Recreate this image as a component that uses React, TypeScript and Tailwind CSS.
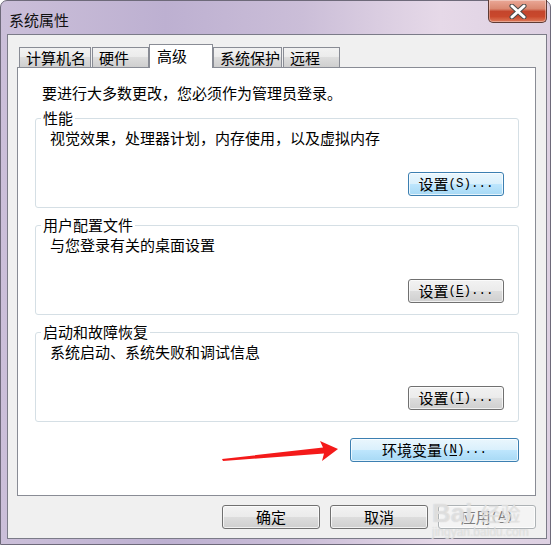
import * as React from 'react';

const cjk = '"Noto Sans CJK SC", "Liberation Sans", sans-serif';

function Key({ k, line = true }: { k: string; line?: boolean }) {
  return (
    <span className="text-[12.5px] tracking-[0px]" style={{ fontFamily: '"Liberation Mono", monospace' }}>
      (<span className={line ? 'underline underline-offset-2' : ''}>{k}</span>)...
    </span>
  );
}

function WinButton({
  children,
  className = '',
  variant = 'normal',
}: {
  children: React.ReactNode;
  className?: string;
  variant?: 'normal' | 'blue' | 'disabled';
}) {
  const look =
    variant === 'blue'
      ? 'border-[#3c7fb1] bg-[linear-gradient(#eaf6fd,#d9f0fc_50%,#bee6fd_50%,#a7d9f5)] text-black'
      : variant === 'disabled'
      ? 'border-[#adb2b5] bg-[#f4f4f4] text-[#7d7d7d]'
      : 'border-[#707070] bg-[linear-gradient(#f2f2f2,#ebebeb_50%,#dddddd_50%,#cfcfcf)] text-black';
  return (
    <div
      className={`h-[24px] flex items-center justify-center rounded-[3px] border text-[15px] leading-[18px] shadow-[inset_0_0_0_1px_rgba(255,255,255,0.7)] ${look} ${className}`}
    >
      {children}
    </div>
  );
}

function GroupBox({ title, desc, button }: { title: string; desc: string; button: React.ReactNode }) {
  return (
    <div className="relative h-[90px] rounded-[3px] border border-[#d5dfe5] flex flex-col justify-between pt-[10px] pl-[14px] pr-[14px] pb-[11px]">
      <span className="absolute left-[5px] top-[-10px] px-[2px] bg-white text-[15px] leading-[18px]">{title}</span>
      <div className="text-[15px] leading-[18px]">{desc}</div>
      <div className="flex justify-end">{button}</div>
    </div>
  );
}

function Tab({ label, w, ml = '', selected = false }: { label: string; w: string; ml?: string; selected?: boolean }) {
  if (selected) {
    return (
      <div
        className={`relative z-10 -mb-px h-[24px] ${w} ${ml} border border-b-0 border-[#898c95] bg-white pl-[7px] pt-[2px] text-[15px] leading-[18px]`}
      >
        {label}
      </div>
    );
  }
  return (
    <div
      className={`h-[20px] ${w} ${ml} border border-b-0 border-[#898c95] bg-[linear-gradient(#f2f2f2,#ebebeb_50%,#dddddd_50%,#cfcfcf)] pl-[6px] pt-[1px] text-[15px] leading-[18px]`}
    >
      {label}
    </div>
  );
}

export default function App() {
  return (
    <div className="relative w-[554px] h-[547px] bg-white overflow-hidden text-black" style={{ fontFamily: cjk }}>
      {/* Window frame */}
      <div className="flex flex-col w-[551px] h-[545px] rounded-t-[7px] border border-[#6e6a7a] bg-[linear-gradient(90deg,#cbbfd9_0%,#bdb0d1_30%,#cbbed8_55%,#e6d9e8_80%,#ddd0e2_100%)] pl-[6px] pr-[3px] pb-[5px]">
        {/* Title bar */}
        <div className="h-[33px] flex justify-between">
          <span className="pl-[2px] pt-[10px] text-[15px] leading-[18px] text-[#111]">系统属性</span>
          <div className="w-[59px] h-[23px] -mt-px flex items-center justify-center rounded-b-[5px] border border-t-0 border-[#5e3b35] bg-[linear-gradient(#eaa897_0%,#da8871_40%,#c4452c_52%,#c9482c_75%,#de7a5a_100%)] shadow-[inset_0_0_0_1px_rgba(255,255,255,0.35)]">
            <svg width="18" height="15" viewBox="0 0 18 15">
              <path d="M3 2 L15 13 M15 2 L3 13" stroke="#4a4a4a" strokeWidth="5" strokeLinecap="round" />
              <path d="M3 2 L15 13 M15 2 L3 13" stroke="#ffffff" strokeWidth="3" strokeLinecap="round" />
            </svg>
          </div>
        </div>

        {/* Client area */}
        <div className="flex-1 flex flex-col border border-[#7b7b88] bg-[#f0f0f0] pl-[9px] pr-[10px] pt-[9px] pb-[9px]">
          {/* Tabs */}
          <div className="h-[23px] flex items-end">
            <Tab label="计算机名" w="w-[72px]" ml="ml-[2px]" />
            <Tab label="硬件" w="w-[57px]" ml="ml-[1px]" />
            <Tab label="高级" w="w-[64px]" selected />
            <Tab label="系统保护" w="w-[69px]" />
            <Tab label="远程" w="w-[57px]" ml="ml-[1px]" />
          </div>

          {/* Tab panel */}
          <div className="h-[429px] border border-[#898c95] bg-white pt-[16px] pl-[17px] pr-[16px] flex flex-col">
            <div className="pl-[7px] text-[15px] leading-[18px]">要进行大多数更改，您必须作为管理员登录。</div>
            <div className="mt-[16px] flex flex-col gap-[17px]">
              <GroupBox
                title="性能"
                desc="视觉效果，处理器计划，内存使用，以及虚拟内存"
                button={
                  <WinButton variant="blue" className="w-[96px]">
                    设置<Key k="S" line={false} />
                  </WinButton>
                }
              />
              <GroupBox
                title="用户配置文件"
                desc="与您登录有关的桌面设置"
                button={
                  <WinButton className="w-[96px]">
                    设置<Key k="E" />
                  </WinButton>
                }
              />
              <GroupBox
                title="启动和故障恢复"
                desc="系统启动、系统失败和调试信息"
                button={
                  <WinButton className="w-[96px]">
                    设置<Key k="T" />
                  </WinButton>
                }
              />
            </div>
            <div className="mt-[16px] flex justify-end">
              <WinButton variant="blue" className="w-[169px]">
                环境变量<Key k="N" />
              </WinButton>
            </div>
          </div>

          {/* Dialog buttons */}
          <div className="mt-[9px] flex justify-end gap-[10px]">
            <WinButton className="w-[98px]">确定</WinButton>
            <WinButton className="w-[98px]">取消</WinButton>
            <WinButton variant="disabled" className="w-[98px]">
              应用<span className="text-[12.5px]" style={{ fontFamily: '"Liberation Mono", monospace' }}>(<span className="underline underline-offset-2">A</span>)</span>
            </WinButton>
          </div>
        </div>
      </div>

      {/* Red annotation arrow */}
      <svg className="absolute left-0 top-0 pointer-events-none" width="554" height="547">
        <polygon points="222,459 323,447.5 320,441 338,449 322,461 324,453.5 223,461" fill="#f41a1a" />
      </svg>

      {/* Watermark */}
      <div className="absolute left-[432px] top-[500px] pointer-events-none flex flex-col items-start text-white/45 [text-shadow:0_0_1px_#c4c4c4]">
        <div className="flex items-end gap-[8px]">
          <span className="text-[26px] leading-[26px] font-bold" style={{ fontFamily: '"Liberation Sans", sans-serif' }}>Bai</span>
          <span className="text-[20px] leading-[24px]">经验</span>
        </div>
        <span className="text-[12px] leading-[13px]" style={{ fontFamily: '"Liberation Sans", sans-serif' }}>jingyan.baidu.com</span>
      </div>
    </div>
  );
}
